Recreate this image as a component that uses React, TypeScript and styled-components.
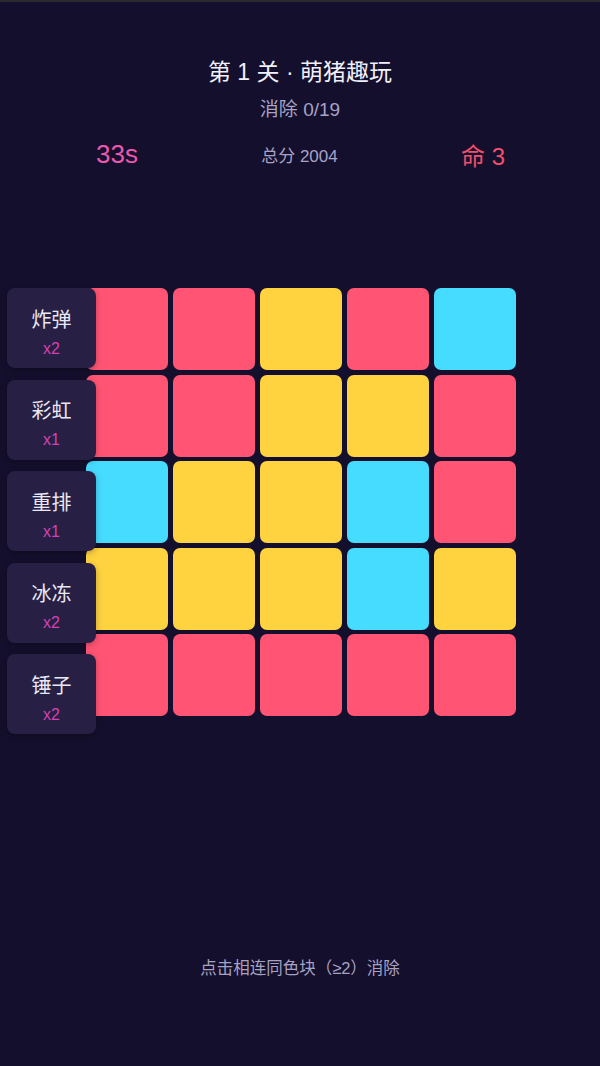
import React from 'react';
import styled, { createGlobalStyle } from 'styled-components';

const GlobalStyle = createGlobalStyle`
  html, body {
    margin: 0;
    padding: 0;
    background: #140f2c;
  }
  body {
    font-family: "Liberation Sans", "Noto Sans CJK SC", sans-serif;
    color: #ece9f6;
  }
`;

type TileColor = 'red' | 'yellow' | 'cyan';

const tileColors: Record<TileColor, string> = {
  red: '#ff5474',
  yellow: '#ffd240',
  cyan: '#46dcff',
};

const board: TileColor[][] = [
  ['red', 'red', 'yellow', 'red', 'cyan'],
  ['red', 'red', 'yellow', 'yellow', 'red'],
  ['cyan', 'yellow', 'yellow', 'cyan', 'red'],
  ['yellow', 'yellow', 'yellow', 'cyan', 'yellow'],
  ['red', 'red', 'red', 'red', 'red'],
];

const tools = [
  { name: '炸弹', count: 2 },
  { name: '彩虹', count: 1 },
  { name: '重排', count: 1 },
  { name: '冰冻', count: 2 },
  { name: '锤子', count: 2 },
];

const Page = styled.div`
  width: 600px;
  height: 1066px;
  box-sizing: border-box;
  border-top: 2px solid #2b2b2f;
  display: flex;
  flex-direction: column;
  align-items: center;
`;

const Title = styled.h1`
  margin: 55px 0 0;
  font-size: 23px;
  line-height: 30px;
  font-weight: 400;
  color: #f2f0fa;
`;

const Progress = styled.div`
  margin-top: 11px;
  font-size: 19px;
  line-height: 24px;
  color: #a8a2c6;
`;

const StatsRow = styled.div`
  margin-top: 16px;
  width: 100%;
  box-sizing: border-box;
  padding: 0 95px 0 96px;
  display: flex;
  align-items: center;
  justify-content: space-between;
  height: 32px;
`;

const Timer = styled.span`
  font-size: 26px;
  color: #ea58b0;
`;

const Score = styled.span`
  font-size: 17px;
  color: #a8a2c6;
`;

const Lives = styled.span`
  font-size: 24px;
  color: #f0506c;
`;

const BoardArea = styled.div`
  position: relative;
  margin-top: 118px;
  width: 600px;
  display: flex;
  justify-content: center;
`;

const Grid = styled.div`
  display: grid;
  grid-template-columns: repeat(5, 82px);
  grid-auto-rows: 82px;
  gap: 4.5px 5px;
  margin-left: 1px;
`;

const Tile = styled.div<{ $color: TileColor }>`
  background: ${({ $color }) => tileColors[$color]};
  border-radius: 7px;
`;

const ToolColumn = styled.div`
  position: absolute;
  left: 7px;
  top: 0;
  display: flex;
  flex-direction: column;
  gap: 11.5px;
`;

const ToolButton = styled.div`
  width: 89px;
  height: 80px;
  box-sizing: border-box;
  padding-top: 9px;
  background: #272044;
  border-radius: 8px;
  box-shadow: 0 2px 6px rgba(0, 0, 0, 0.25);
  display: flex;
  flex-direction: column;
  align-items: center;
  justify-content: center;
  gap: 6px;
`;

const ToolName = styled.span`
  font-size: 20px;
  line-height: 26px;
  color: #ebe8f5;
`;

const ToolCount = styled.span`
  font-size: 16px;
  line-height: 20px;
  color: #d441b4;
`;

const Hint = styled.div`
  margin-top: auto;
  margin-bottom: 87px;
  font-size: 16.5px;
  line-height: 22px;
  color: #a7a1c2;
`;

const App: React.FC = () => {
  return (
    <Page>
      <GlobalStyle />
      <Title>第 1 关 · 萌猪趣玩</Title>
      <Progress>消除 0/19</Progress>
      <StatsRow>
        <Timer>33s</Timer>
        <Score>总分 2004</Score>
        <Lives>命 3</Lives>
      </StatsRow>
      <BoardArea>
        <Grid>
          {board.map((row, r) =>
            row.map((color, c) => <Tile key={`${r}-${c}`} $color={color} />)
          )}
        </Grid>
        <ToolColumn>
          {tools.map((tool) => (
            <ToolButton key={tool.name}>
              <ToolName>{tool.name}</ToolName>
              <ToolCount>x{tool.count}</ToolCount>
            </ToolButton>
          ))}
        </ToolColumn>
      </BoardArea>
      <Hint>点击相连同色块（≥2）消除</Hint>
    </Page>
  );
};

export default App;
